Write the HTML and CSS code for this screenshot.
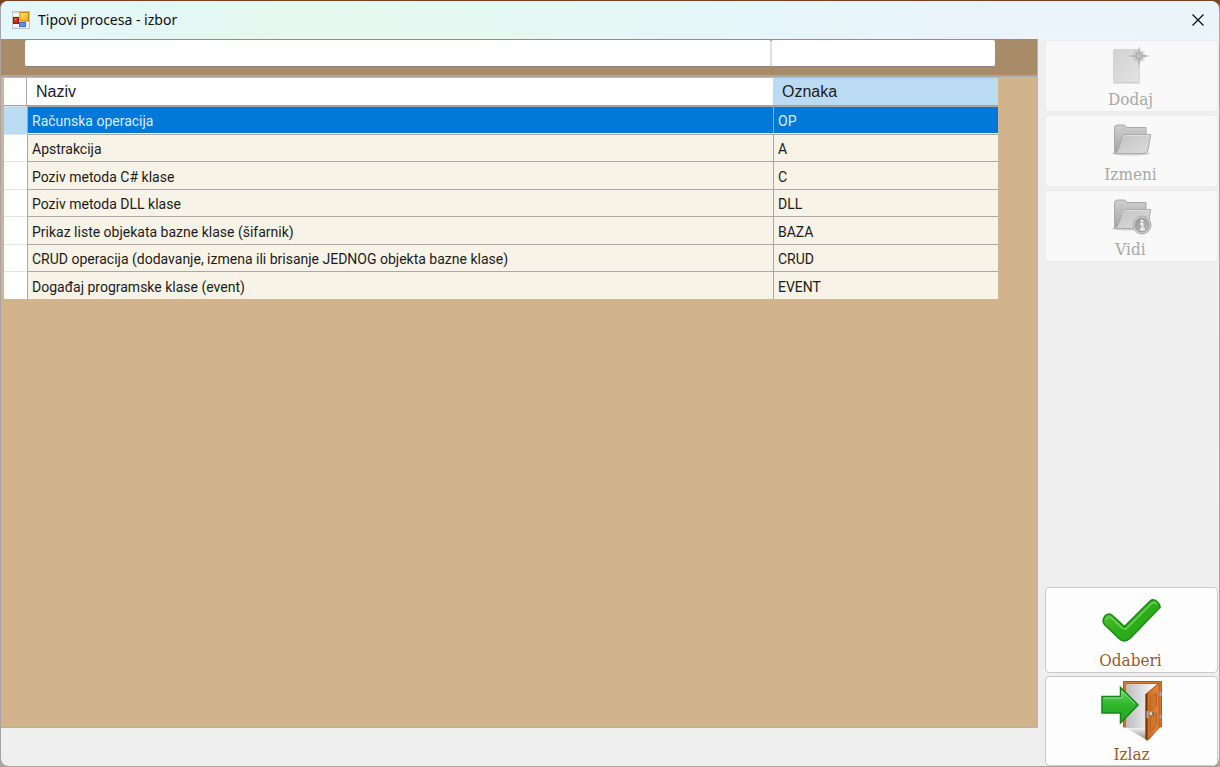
FILE: index.html
```html
<!DOCTYPE html>
<html lang="sr-Latn">
<head>
<meta charset="utf-8">
<title>Tipovi procesa - izbor</title>
<link rel="stylesheet" href="styles.css">
</head>
<body>
<div class="window">
  <header class="titlebar">
    <svg class="app-icon" width="18" height="18" viewBox="0 0 18 18" aria-hidden="true">
      <defs>
        <linearGradient id="yel" x1="0" y1="0" x2="1" y2="1"><stop offset="0" stop-color="#ffe680"/><stop offset="1" stop-color="#e8a800"/></linearGradient>
      </defs>
      <rect x="0.5" y="0.5" width="17" height="17" fill="#dfe4e7" stroke="#b9c3c8"/>
      <path d="M1 4h6M6.500 11v6M15.500 11v6M1 14.500h6" stroke="#fff" stroke-width="2"/>
      <rect x="1.500" y="6.500" width="5" height="6" fill="#c3281c" stroke="#8d1b12"/>
      <rect x="2.500" y="7.500" width="2" height="2" fill="#e8776c"/>
      <rect x="8" y="1.500" width="8.500" height="8.500" fill="url(#yel)" stroke="#c08a10"/>
      <rect x="7.500" y="11.500" width="6" height="4" fill="#5b93e6" stroke="#3b6fc4"/>
    </svg>
    <h1 class="title">Tipovi procesa - izbor</h1>
    <button class="close" type="button" aria-label="Zatvori">
      <svg width="14" height="14" viewBox="0 0 14 14" aria-hidden="true"><path d="M1.500 1.500l11 11M12.500 1.500l-11 11" stroke="#111" stroke-width="1.300" fill="none"/></svg>
    </button>
  </header>
  <div class="content">
    <main class="main">
      <section class="panel">
        <form class="filters">
          <input class="filter filter-name" type="text" aria-label="Naziv">
          <input class="filter filter-code" type="text" aria-label="Oznaka">
        </form>
        <div class="grid-area">
          <table class="grid">
            <colgroup><col class="col-mark"><col class="col-name"><col class="col-code"></colgroup>
            <thead>
              <tr><th class="mark"></th><th scope="col">Naziv</th><th scope="col" class="active">Oznaka</th></tr>
            </thead>
            <tbody>
              <tr class="selected"><td class="mark"></td><td>Računska operacija</td><td>OP</td></tr>
              <tr><td class="mark"></td><td>Apstrakcija</td><td>A</td></tr>
              <tr><td class="mark"></td><td>Poziv metoda C# klase</td><td>C</td></tr>
              <tr><td class="mark"></td><td>Poziv metoda DLL klase</td><td>DLL</td></tr>
              <tr><td class="mark"></td><td>Prikaz liste objekata bazne klase (šifarnik)</td><td>BAZA</td></tr>
              <tr><td class="mark"></td><td>CRUD operacija (dodavanje, izmena ili brisanje JEDNOG objekta bazne klase)</td><td>CRUD</td></tr>
              <tr><td class="mark"></td><td>Događaj programske klase (event)</td><td>EVENT</td></tr>
            </tbody>
          </table>
        </div>
      </section>
    </main>
    <aside class="side">
      <button class="action" type="button" disabled>
        <svg width="42" height="42" viewBox="0 0 42 42" aria-hidden="true">
          <defs>
            <linearGradient id="page" x1="0" y1="0" x2="1" y2="1"><stop offset="0" stop-color="#d2d2d2"/><stop offset=".5" stop-color="#dadada"/><stop offset="1" stop-color="#e3e3e3"/></linearGradient>
            <radialGradient id="glow"><stop offset="0" stop-color="#aaa"/><stop offset="1" stop-color="#c8c8c8" stop-opacity="0"/></radialGradient>
          </defs>
          <rect x="3.500" y="4.500" width="26" height="33" rx="1" fill="url(#page)" stroke="#d5d5d5"/>
          <path d="M3 38h27" stroke="#c9c9c9"/>
          <circle cx="29" cy="11" r="8" fill="url(#glow)"/>
          <path d="M29 1l1.500 7 3-2-2 3.500 9 1.500-9 1.500 2 3.500-3-2L29 22l-1.500-8-3 2 2-3.500-9-1.500 9-1.500-2-3.500 3 2z" fill="#b4b4b4"/>
          <circle cx="29" cy="11" r="1.500" fill="#ccc"/>
        </svg>
        <span>Dodaj</span>
      </button>
      <button class="action" type="button" disabled>
        <svg width="42" height="42" viewBox="0 0 42 42" aria-hidden="true">
          <defs>
            <linearGradient id="back" x1="0" y1="0" x2="0" y2="1"><stop offset="0" stop-color="#cfcfcf"/><stop offset="1" stop-color="#a4a4a4"/></linearGradient>
            <linearGradient id="front" x1="0" y1="0" x2="1" y2="1"><stop offset="0" stop-color="#c3c3c3"/><stop offset="1" stop-color="#dcdcdc"/></linearGradient>
          </defs>
          <g id="folder">
            <ellipse cx="21" cy="33.500" rx="19" ry="2" fill="#d0d0d0"/>
            <path d="M4.500 33V8q0-3 3-3H14q2 0 2.500 2.500H36V17L30 33z" fill="url(#back)" stroke="#a9a9a9"/>
            <path d="M5 33.500q3-2 4-6l3-9q1-4 4-4h24.500q.5 0 0 1.500L38 30q-1 3.500-3 3.500z" fill="url(#front)" stroke="#ababab"/>
            <path d="M13 18q1-2.500 3-2.500h23" fill="none" stroke="#ddd"/>
          </g>
        </svg>
        <span>Izmeni</span>
      </button>
      <button class="action" type="button" disabled>
        <svg width="42" height="42" viewBox="0 0 42 42" aria-hidden="true">
          <defs><linearGradient id="info" x1="0" y1="0" x2="1" y2="1"><stop offset="0" stop-color="#969696"/><stop offset="1" stop-color="#bcbcbc"/></linearGradient></defs>
          <use href="#folder"/>
          <circle cx="32" cy="30" r="9" fill="#d6d6d6" stroke="#a8a8a8"/>
          <circle cx="32" cy="30" r="7" fill="url(#info)" stroke="#999"/>
          <circle cx="32" cy="26" r="1.500" fill="#eee"/>
          <path d="M30 29h2.500v5M30 34.500h5" stroke="#eee" stroke-width="2" fill="none"/>
        </svg>
        <span>Vidi</span>
      </button>
      <div class="spacer"></div>
      <button class="action choose" type="button">
        <svg width="60" height="46" viewBox="0 0 60 46" aria-hidden="true">
          <defs><linearGradient id="chk" x1="0" y1="0" x2="1" y2="1"><stop offset="0" stop-color="#5cc83a"/><stop offset=".5" stop-color="#2fae1c"/><stop offset="1" stop-color="#1ea010"/></linearGradient></defs>
          <path d="M4 18q4-4 8 0L23.500 28.500 49 3q3.500-2.500 7 .5t3 6L29 40.500q-6 5-11 0L3.500 26.500q-3-4 .5-8.500z" fill="url(#chk)" stroke="#1a8a16" stroke-width="1.500"/>
          <path d="M5 22q2-4 5-2.500L21 30q3 2 5 0L51 5q3-1.500 5 1" fill="none" stroke="#74d35c" stroke-width="1.500"/>
        </svg>
        <span>Odaberi</span>
      </button>
      <button class="action exit" type="button">
        <svg width="62" height="62" viewBox="0 0 62 62" aria-hidden="true">
          <defs>
            <linearGradient id="hall" x1="0" y1="0" x2="1" y2="0"><stop offset="0" stop-color="#bdbdbd"/><stop offset="1" stop-color="#fff"/></linearGradient>
            <linearGradient id="floor" x1="0" y1="0" x2="0" y2="1"><stop offset="0" stop-color="#f2f2f2"/><stop offset="1" stop-color="#8c8c8c"/></linearGradient>
            <linearGradient id="wood" x1="0" y1="0" x2="1" y2="0"><stop offset="0" stop-color="#c9691f"/><stop offset="1" stop-color="#e08a40"/></linearGradient>
            <linearGradient id="arr" x1="0" y1="0" x2="0" y2="1"><stop offset="0" stop-color="#70d56a"/><stop offset=".5" stop-color="#2fb52b"/><stop offset="1" stop-color="#22a81f"/></linearGradient>
          </defs>
          <path d="M22.500 1.500h38V47h-3V4H25v43h-2.500z" fill="#d9762c" stroke="#b2561a"/>
          <path d="M25 4h31L46 14v34H25z" fill="url(#hall)"/>
          <path d="M25 48h21v12z" fill="url(#floor)"/>
          <path d="M45 14L58 3V48L47 60h-2z" fill="url(#wood)" stroke="#b25a1a"/>
          <path d="M45.500 14v45.500" stroke="#7b340b" stroke-width="2"/>
          <path d="M49.500 18l6-5v13l-6 4zM49.500 37l6-4v12l-6 7z" fill="#d27429" stroke="#bb6220"/>
          <path d="M46.500 31v7M59.500 12v4M59.500 35v3" stroke="#aaa" stroke-width="2"/>
          <path d="M49 33.500h4" stroke="#665" stroke-width="3"/>
          <circle cx="50" cy="33.500" r="1.500" fill="#ddd"/>
          <path d="M1 16.500h18.500V7.500L37 25 19.500 43V33H1z" fill="url(#arr)" stroke="#13851a" stroke-width="1.500"/>
          <path d="M2.500 18H21v-7l13 13" fill="none" stroke="#8fe389"/>
        </svg>
        <span>Izlaz</span>
      </button>
    </aside>
  </div>
</div>
</body>
</html>
```

FILE: styles.css
```css
* { box-sizing: border-box; }

body {
  margin: 0;
  padding: 1px 1px 1px 0;
  height: 100vh;
  background: linear-gradient(#7d4424 0 2px, #aaa6a2 12px, #a8a49c);
  font-family: "Liberation Sans", Arial, sans-serif;
  color: #1c1c1c;
}

.window {
  display: flex;
  flex-direction: column;
  height: 100%;
  border-left: 1px solid #a5a5a5;
  border-radius: 8px;
  overflow: hidden;
  background: #efefef;
}

.titlebar {
  display: flex;
  align-items: center;
  flex: none;
  height: 38px;
  padding: 0 14px 0 11px;
  background: linear-gradient(90deg, #e6f7fb 0, #e4f7f4 13%, #e6f8ef 24%, #e6f8f2 40%, #e6f6f9 60%, #eaf4fa 85%, #ebf4f8);
}

.title {
  flex: 1;
  margin: 0 0 0 8px;
  font: 14px/20px "Noto Sans", sans-serif;
  color: #111;
}

.close {
  display: flex;
  padding: 0;
  border: 0;
  background: none;
}

.content { display: flex; flex: 1; min-height: 0; }

.main { flex: 1; padding-bottom: 38px; min-width: 0; }

.panel {
  height: 100%;
  border-right: 1px solid #b5b5b5;
  border-bottom: 1px solid #b0b0b0;
  background: #d2b48c;
}

.filters {
  display: flex;
  height: 38px;
  padding: 1px 42px 8px 24px;
  background: #a88b68;
  border-bottom: 2px solid #a9a9ac;
}

.filter {
  height: 27px;
  min-width: 0;
  padding: 0 4px;
  border: 0;
  border-bottom: 1px solid #858585;
  border-radius: 2px;
  background: #fff;
  font: 15px "Liberation Sans", sans-serif;
}
.filter-name { flex: 1; border-right: 1px solid #e2e0de; }
.filter-code { width: 224px; border-left: 1px solid #e2e0de; }

.grid-area { padding: 1px 39px 0 3px; }

.grid {
  width: 100%;
  table-layout: fixed;
  border-collapse: separate;
  border-spacing: 0;
}
.col-mark { width: 23px; }
.col-code { width: 225px; }

.grid th {
  height: 28px;
  padding: 0 9px;
  background: #fff;
  border-bottom: 1px solid #a0a0a0;
  font: 16px/20px "Liberation Sans", Arial, sans-serif;
  text-align: left;
}
.grid th.active { background: #bbdbf2; }
.grid th.mark { border-right: 1px solid #a9a9a9; }

.grid td {
  height: 27px;
  padding: 2px 4px 0;
  background: #f7f3e6;
  border-top: 1px solid #a9a9a9;
  border-left: 1px solid #a9a9a9;
  font: 14px/20px Roboto, sans-serif;
  white-space: nowrap;
}
.grid tr:nth-child(odd) td { height: 28px; }
.grid td.mark {
  padding: 0;
  background: #fff;
  border-left: 0;
  border-top-color: #e4e4e4;
}
.grid .selected td {
  background: #0078d7;
  border-bottom: 1px solid #fff;
  color: #dceefe;
}
.grid .selected td.mark { background: #bbdbf2; border-bottom: 0; }

.side {
  display: flex;
  flex-direction: column;
  gap: 3px;
  flex: none;
  width: 181px;
  padding: 1px 1px 0 7px;
}
.spacer { flex: 1; }

.action {
  display: flex;
  flex-direction: column;
  align-items: center;
  justify-content: space-between;
  height: 86px;
  padding: 10px 2px 0 0;
  border: 1px solid #c9c9c9;
  border-radius: 4px;
  background: #fdfdfd;
  color: #9a5a2c;
  font: 17px/24px "DejaVu Serif Condensed", "DejaVu Serif", serif;
}
.action:disabled {
  height: 72px;
  padding-top: 4px;
  border-color: #ececec;
  background: #f9f9f9;
  color: #a8a8a8;
}
.action svg { flex: none; }
.exit { height: 90px; padding: 3px 0 2px; }
```
